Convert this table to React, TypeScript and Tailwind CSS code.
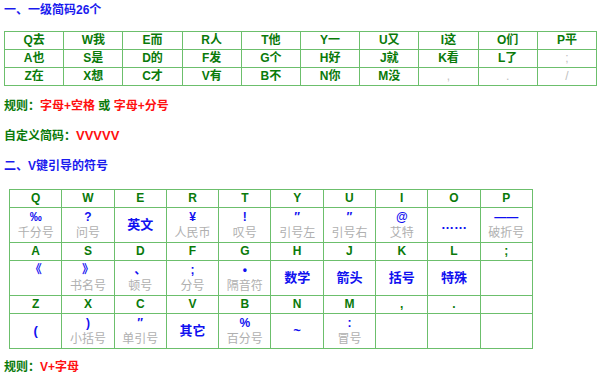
import React from "react";

const font = "font-['Liberation_Sans','Noto_Sans_CJK_SC',sans-serif]";

const simple = [
  ["Q去", "W我", "E而", "R人", "T他", "Y一", "U又", "I这", "O们", "P平"],
  ["A也", "S是", "D的", "F发", "G个", "H好", "J就", "K看", "L了", ";"],
  ["Z在", "X想", "C才", "V有", "B不", "N你", "M没", ",", ".", "/"],
];

type Cell = { sym?: string; label?: string; big?: string };

const vRows: { keys: string[]; cells: Cell[] }[] = [
  {
    keys: ["Q", "W", "E", "R", "T", "Y", "U", "I", "O", "P"],
    cells: [
      { sym: "‰", label: "千分号" },
      { sym: "?", label: "问号" },
      { big: "英文" },
      { sym: "¥", label: "人民币" },
      { sym: "!", label: "叹号" },
      { sym: "″", label: "引号左" },
      { sym: "″", label: "引号右" },
      { sym: "@", label: "艾特" },
      { big: "……" },
      { sym: "——", label: "破折号" },
    ],
  },
  {
    keys: ["A", "S", "D", "F", "G", "H", "J", "K", "L", ";"],
    cells: [
      { sym: "《", label: "\u00a0" },
      { sym: "》", label: "书名号" },
      { sym: "、", label: "顿号" },
      { sym: ";", label: "分号" },
      { sym: "•", label: "隔音符" },
      { big: "数学" },
      { big: "箭头" },
      { big: "括号" },
      { big: "特殊" },
      {},
    ],
  },
  {
    keys: ["Z", "X", "C", "V", "B", "N", "M", ",", ".", ""],
    cells: [
      { big: "(" },
      { sym: ")", label: "小括号" },
      { sym: "″", label: "单引号" },
      { big: "其它" },
      { sym: "%", label: "百分号" },
      { big: "~" },
      { sym: ":", label: "冒号" },
      {},
      {},
      {},
    ],
  },
];

const VCell: React.FC<{ c: Cell }> = ({ c }) => (
  <div className="h-[35px] border-r border-b border-[#6cbf6c] flex flex-col items-center justify-center">
    {c.big && <div className="text-[13px] font-bold text-[#1010f0] leading-[16px]">{c.big}</div>}
    {c.sym && (
      <>
        <div className="text-[12px] font-bold text-[#1010f0] leading-[16px]">{c.sym}</div>
        <div className="text-[12px] text-[#b0b0b0] leading-[17px]">{c.label}</div>
      </>
    )}
  </div>
);

export default function App() {
  return (
    <div className={`w-[600px] h-[379px] bg-white px-[4px] overflow-hidden ${font}`}>
      <div className="h-[20px] leading-[20px] text-[12px] font-bold text-[#1a1aee]">一、一级简码26个</div>

      <div className="mt-[11px] w-[593px] grid grid-cols-10 border-l border-t border-[#6cbf6c]">
        {simple.flat().map((t, i) => (
          <div
            key={i}
            className={`h-[18px] leading-[17px] text-center text-[12px] border-r border-b border-[#6cbf6c] ${
              t.length > 1 ? "font-bold text-[#0a7a0a]" : "text-[#c0c0c0]"
            }`}
          >
            {t}
          </div>
        ))}
      </div>

      <div className="mt-[10px] h-[20px] leading-[20px] text-[12px] font-bold">
        <span className="text-[#0a7a0a]">规则：</span>
        <span className="text-[#ff1010]">字母+空格</span>
        <span className="text-[#0a7a0a]"> 或 </span>
        <span className="text-[#ff1010]">字母+分号</span>
      </div>
      <div className="mt-[10px] h-[20px] leading-[20px] text-[12px] font-bold">
        <span className="text-[#0a7a0a]">自定义简码：</span>
        <span className="text-[#ff1010] text-[13px]">VVVVV</span>
      </div>
      <div className="mt-[10px] h-[20px] leading-[20px] text-[12px] font-bold text-[#1a1aee]">二、V键引导的符号</div>

      <div className="mt-[13px] ml-[5px] w-[524px] grid grid-cols-10 border-l border-t border-[#6cbf6c]">
        {vRows.map((r, ri) => (
          <React.Fragment key={ri}>
            {r.keys.map((k, ki) => (
              <div
                key={"k" + ki}
                className="h-[18px] leading-[17px] text-center text-[12px] font-bold text-[#0a7a0a] border-r border-b border-[#6cbf6c]"
              >
                {k}
              </div>
            ))}
            {r.cells.map((c, ci) => (
              <VCell key={"c" + ci} c={c} />
            ))}
          </React.Fragment>
        ))}
      </div>

      <div className="mt-[8px] h-[20px] leading-[20px] text-[12px] font-bold">
        <span className="text-[#0a7a0a]">规则：</span>
        <span className="text-[#ff1010]">V+字母</span>
      </div>
    </div>
  );
}
